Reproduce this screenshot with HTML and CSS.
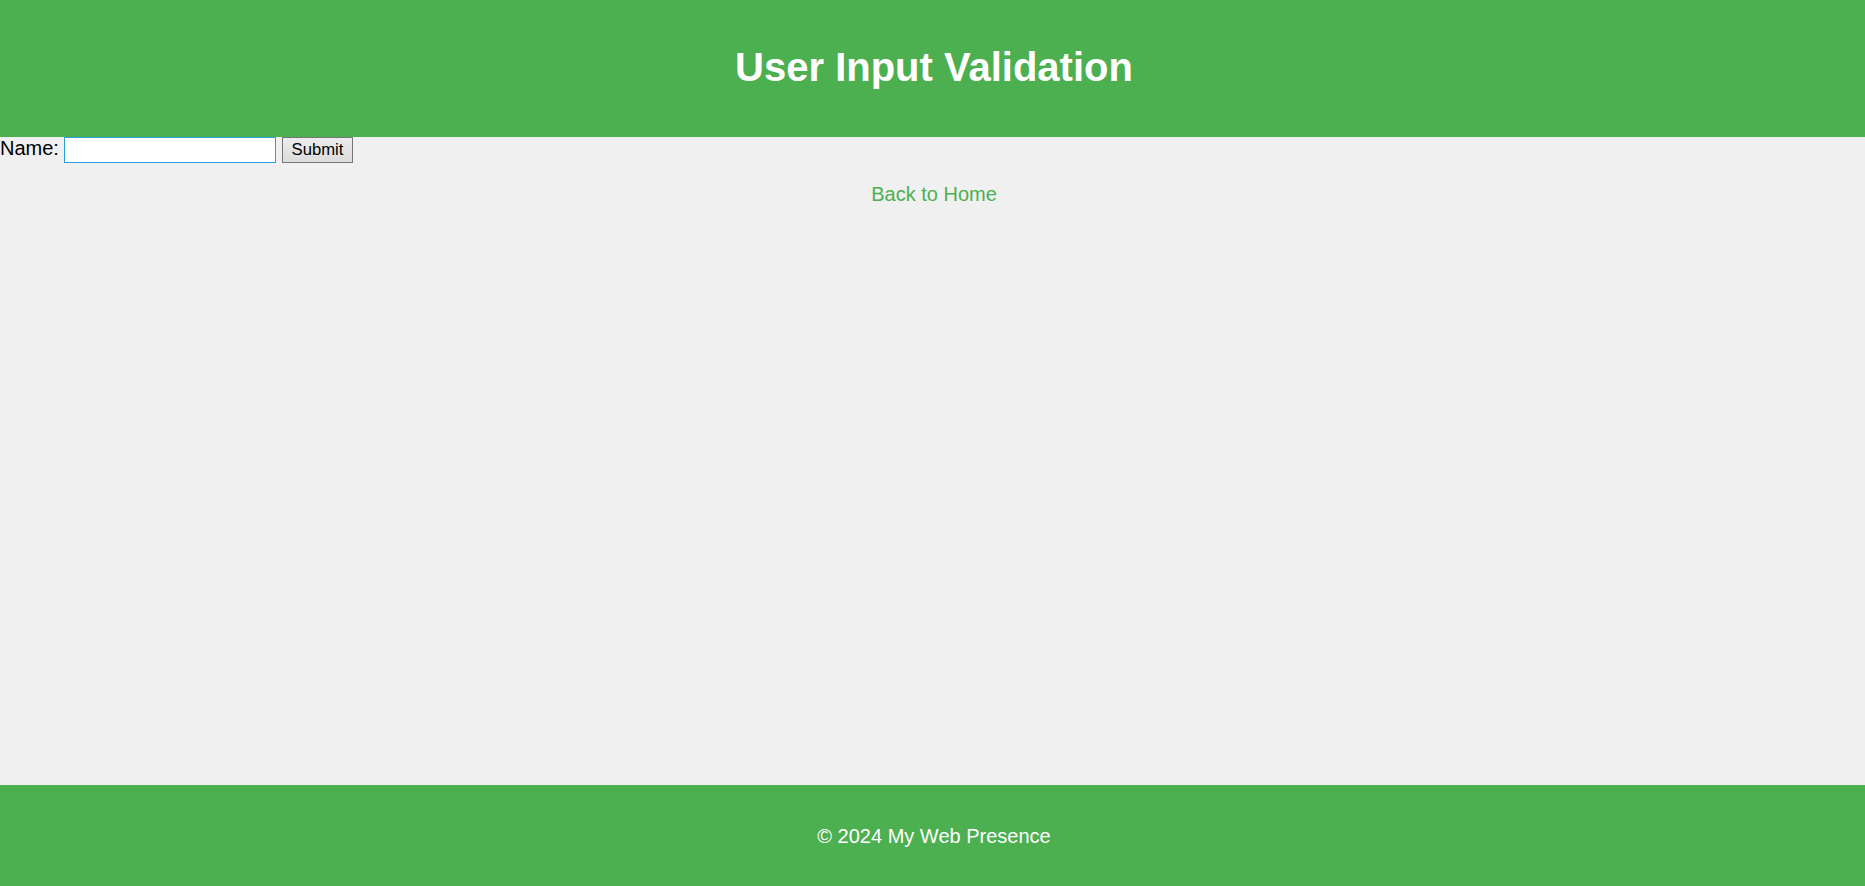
FILE: index.html
```html
<!DOCTYPE html>
<html lang="en">
<head>
<meta charset="utf-8">
<title>User Input Validation</title>
<link rel="stylesheet" href="styles.css">
</head>
<body>
<header class="site-header">
  <h1 class="site-title">User Input Validation</h1>
</header>
<main class="content">
  <form class="name-form">
    <label class="name-label" for="name">Name:</label> <input class="name-input" type="text" id="name" name="name"> <button class="submit-btn" type="submit">Submit</button>
  </form>
  <p class="back-link-wrap"><a class="back-link" href="#">Back to Home</a></p>
</main>
<footer class="site-footer">
  <p class="footer-text">&copy; 2024 My Web Presence</p>
</footer>
</body>
</html>
```

FILE: styles.css
```css
html, body {
  margin: 0;
  padding: 0;
}

body {
  font-family: "Liberation Sans", Arial, sans-serif;
  font-size: 20px;
  background: #f0f0f0;
  color: #000;
  min-height: 100vh;
  display: flex;
  flex-direction: column;
}

.site-header {
  background: #4caf50;
  color: #fff;
  padding: 18.75px 0 18.75px 3px;
  text-align: center;
}

.site-title {
  margin: 25.6px 0 28px;
  font-size: 40px;
  font-weight: bold;
  line-height: 46px;
}

.content {
  flex: 1;
}

.name-form {
  margin: 0;
}

.name-label {
  font-size: 20px;
}

.name-input {
  box-sizing: border-box;
  width: 212px;
  height: 26px;
  margin: 0;
  padding: 1px 3px;
  border: 1px solid #2a9fdc;
  background: #fff;
  font-family: "Liberation Sans", Arial, sans-serif;
  font-size: 16.67px;
  outline: none;
}

.submit-btn {
  box-sizing: border-box;
  height: 26px;
  margin: 0;
  padding: 0 8.5px;
  border: 1px solid #767676;
  border-radius: 0;
  background: linear-gradient(#ececec, #dcdcdc);
  color: #000;
  font-family: "Liberation Sans", Arial, sans-serif;
  font-size: 16.67px;
}

.back-link-wrap {
  margin: 20px 0;
  padding-left: 3px;
  text-align: center;
}

.back-link {
  color: #4caf50;
  text-decoration: none;
}

.site-footer {
  background: #4caf50;
  color: #fff;
  padding: 20.25px 0 18.25px 3px;
  text-align: center;
}

.footer-text {
  margin: 20px 0;
}
```
